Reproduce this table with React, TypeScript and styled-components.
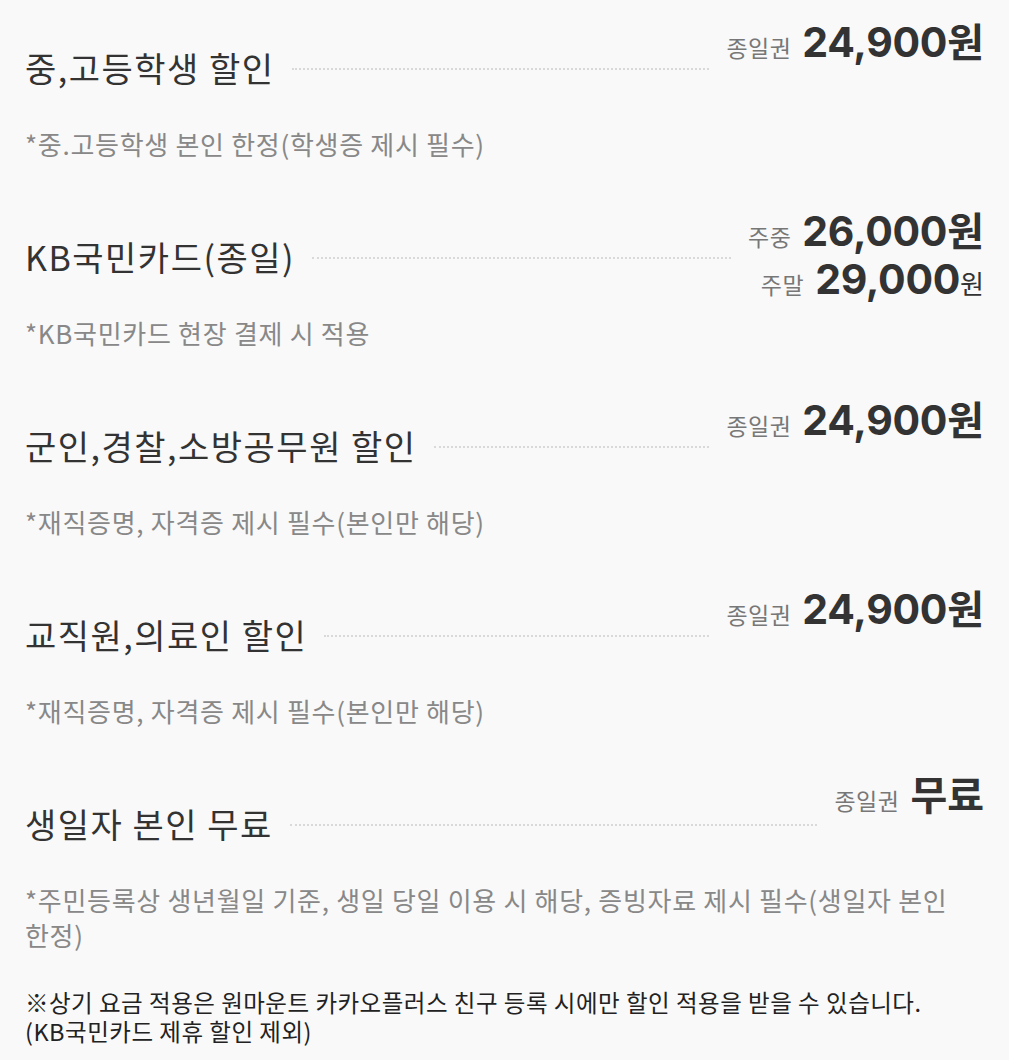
import React from "react";
import styled, { createGlobalStyle } from "styled-components";

const GlobalStyle = createGlobalStyle`
  html, body {
    margin: 0;
    padding: 0;
    background: #f9f9f9;
  }
  body {
    font-family: "Noto Sans CJK KR", "Noto Sans", sans-serif;
    color: #333;
    word-break: keep-all;
  }
`;

type Price = {
  label: string;
  amount: string;
  unit?: string;
  smallUnit?: boolean;
};

type Item = {
  title: string;
  prices: Price[];
  desc: string;
};

const items: Item[] = [
  {
    title: "중,고등학생 할인",
    prices: [{ label: "종일권", amount: "24,900", unit: "원" }],
    desc: "*중.고등학생 본인 한정(학생증 제시 필수)",
  },
  {
    title: "KB국민카드(종일)",
    prices: [
      { label: "주중", amount: "26,000", unit: "원" },
      { label: "주말", amount: "29,000", unit: "원", smallUnit: true },
    ],
    desc: "*KB국민카드 현장 결제 시 적용",
  },
  {
    title: "군인,경찰,소방공무원 할인",
    prices: [{ label: "종일권", amount: "24,900", unit: "원" }],
    desc: "*재직증명, 자격증 제시 필수(본인만 해당)",
  },
  {
    title: "교직원,의료인 할인",
    prices: [{ label: "종일권", amount: "24,900", unit: "원" }],
    desc: "*재직증명, 자격증 제시 필수(본인만 해당)",
  },
  {
    title: "생일자 본인 무료",
    prices: [{ label: "종일권", amount: "무료" }],
    desc: "*주민등록상 생년월일 기준, 생일 당일 이용 시 해당, 증빙자료 제시 필수(생일자 본인 한정)",
  },
];

const Page = styled.div`
  padding: 20px 25px 0 25px;
`;

const List = styled.ul`
  list-style: none;
  margin: 0;
  padding: 0;
  display: flex;
  flex-direction: column;
  gap: 48px;
`;

const Row = styled.li`
  display: flex;
  flex-direction: column;
`;

// header keeps a fixed height; a two-line price just hangs below it
const Header = styled.div`
  display: flex;
  align-items: flex-start;
  height: 71px;
`;

const Lead = styled.div`
  flex: 1;
  display: flex;
  align-items: center;
  gap: 17px;
  margin-top: 25px;
  min-width: 0;
`;

const Title = styled.h3`
  margin: 0;
  font-size: 34px;
  line-height: 46px;
  font-weight: 400;
  letter-spacing: 1.5px;
  color: #333;
  white-space: nowrap;
`;

const Dots = styled.span`
  flex: 1;
  height: 0;
  margin-top: 2px;
  border-top: 2px dotted #d9d9d9;
`;

const PriceBox = styled.div`
  margin-left: 17px;
  display: flex;
  flex-direction: column;
  align-items: flex-end;
`;

const PriceLine = styled.div`
  line-height: 50px;
  height: 50px;
  white-space: nowrap;
`;

const PriceLabel = styled.span`
  font-size: 23px;
  line-height: 1;
  letter-spacing: 0.5px;
  color: #777;
  margin-right: 11px;
`;

const Amount = styled.span<{ $hangul?: boolean }>`
  font-family: Inter, "Noto Sans CJK KR", sans-serif;
  font-size: ${({ $hangul }) => ($hangul ? "40px" : "41px")};
  font-weight: 700;
  line-height: 1;
  color: #333;
  letter-spacing: ${({ $hangul }) => ($hangul ? "0" : "-0.3px")};
`;

const Unit = styled.span<{ $small?: boolean }>`
  font-family: "Noto Sans CJK KR", sans-serif;
  font-size: ${({ $small }) => ($small ? "26px" : "40px")};
  font-weight: ${({ $small }) => ($small ? 400 : 700)};
  line-height: 1;
  color: #333;
`;

const Desc = styled.p`
  margin: 35px 0 0;
  font-size: 26px;
  line-height: 35px;
  letter-spacing: 0.7px;
  color: #888;
`;

const Notice = styled.p`
  margin: 36px 0 0;
  font-size: 23.5px;
  line-height: 29px;
  letter-spacing: 0.5px;
  color: #222;
`;

const isHangul = (s: string) => /[가-힣]/.test(s);

export default function App() {
  return (
    <Page>
      <GlobalStyle />
      <List>
        {items.map((item) => (
          <Row key={item.title}>
            <Header>
              <Lead>
                <Title>{item.title}</Title>
                <Dots />
              </Lead>
              <PriceBox>
                {item.prices.map((p) => (
                  <PriceLine key={p.label}>
                    <PriceLabel>{p.label}</PriceLabel>
                    <Amount $hangul={isHangul(p.amount)}>{p.amount}</Amount>
                    {p.unit && <Unit $small={p.smallUnit}>{p.unit}</Unit>}
                  </PriceLine>
                ))}
              </PriceBox>
            </Header>
            <Desc>{item.desc}</Desc>
          </Row>
        ))}
      </List>
      <Notice>
        ※상기 요금 적용은 원마운트 카카오플러스 친구 등록 시에만 할인 적용을 받을 수 있습니다.
        <br />
        (KB국민카드 제휴 할인 제외)
      </Notice>
    </Page>
  );
}
